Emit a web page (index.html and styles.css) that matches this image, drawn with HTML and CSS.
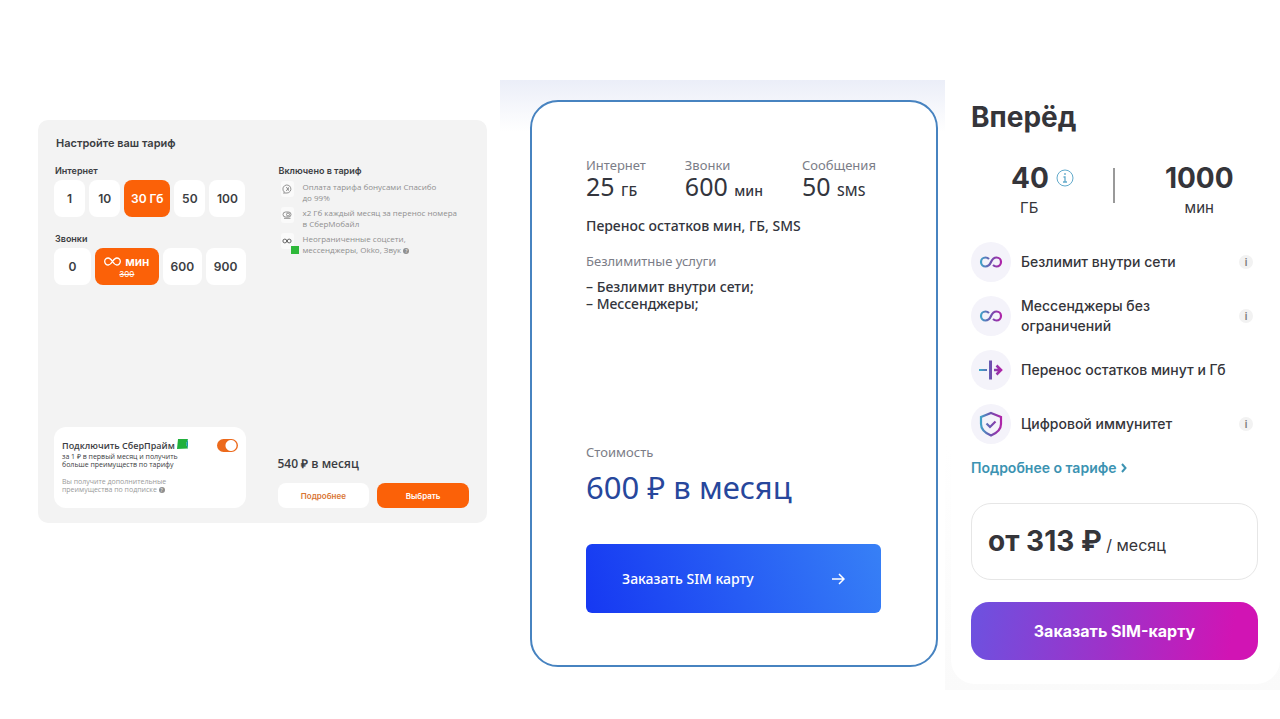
FILE: index.html
```html
<!DOCTYPE html>
<html lang="ru">
<head>
    <meta charset="UTF-8">
    <meta name="viewport" content="width=device-width, initial-scale=1.0">
    <title>Тарифы</title>
    <link rel="stylesheet" href="styles.css">
</head>
<body>
    <!-- shared gradient for the icons of the third card -->
    <svg class="defs" width="0" height="0" aria-hidden="true">
        <defs>
            <linearGradient id="grad" gradientUnits="userSpaceOnUse" x1="2" y1="0" x2="24" y2="0">
                <stop offset="0" stop-color="#3fa9c9"/>
                <stop offset="0.5" stop-color="#6f4fae"/>
                <stop offset="1" stop-color="#b321a8"/>
            </linearGradient>
        </defs>
    </svg>

    <main class="tariffs">
        <section class="setup">
            <h2 class="setup-title">Настройте ваш тариф</h2>
            <div class="setup-columns">
                <div class="setup-left">
                    <h3 class="setup-label">Интернет</h3>
                    <div class="options internet">
                        <button class="option">1</button>
                        <button class="option">10</button>
                        <button class="option active">30 Гб</button>
                        <button class="option">50</button>
                        <button class="option">100</button>
                    </div>
                    <h3 class="setup-label">Звонки</h3>
                    <div class="options calls">
                        <button class="option">0</button>
                        <button class="option active">
                            <span class="unlim">
                                <svg width="17" height="9" viewBox="0 0 17 9" fill="none" stroke="#fff" stroke-width="1.3"><path d="M8.5 4.5C6.900 2.200 5.800 1 4.200 1a3.500 3.500 0 0 0 0 7c1.600 0 2.700-1.200 4.300-3.500S11.200 1 12.800 1a3.500 3.500 0 0 1 0 7c-1.600 0-2.700-1.200-4.300-3.500z"/></svg>
                                мин
                            </span>
                            <s>300</s>
                        </button>
                        <button class="option">600</button>
                        <button class="option">900</button>
                    </div>
                    <div class="prime">
                        <div class="prime-head">
                            <label for="prime">Подключить СберПрайм</label>
                            <svg width="11" height="10" viewBox="0 0 11 10"><path d="M1 0h10L9 5l2 4.500L0 10z" fill="#21b03c"/><path d="M11 0L9 5l2 4.500z" fill="#1c9aa0"/></svg>
                            <input class="switch" type="checkbox" id="prime" checked>
                        </div>
                        <p class="prime-text">за 1 ₽ в первый месяц и получить<br>больше преимуществ по тарифу</p>
                        <p class="prime-note">Вы получите дополнительные<br>преимущества по подписке <span class="hint">?</span></p>
                    </div>
                </div>
                <div class="setup-right">
                    <h3 class="setup-label">Включено в тариф</h3>
                    <ul class="included">
                        <li>
                            <span class="included-icon">
                                <svg width="10" height="10" viewBox="0 0 10 10" fill="none" stroke="#777" stroke-width="0.8"><path d="M2.500 8.200A4 4 0 1 1 5 9H1.500z"/><path d="M4 3.200L6 5 4 6.800M6.300 3.200v3.600"/></svg>
                            </span>
                            <p>Оплата тарифа бонусами Спасибо<br>до 99%</p>
                        </li>
                        <li>
                            <span class="included-icon">
                                <svg width="10" height="10" viewBox="0 0 10 10" fill="none" stroke="#777" stroke-width="0.8"><rect x="1" y="2" width="8" height="5" rx="2.500"/><circle cx="6" cy="4.500" r="1.500"/><path d="M2 8.300h6.500"/></svg>
                            </span>
                            <p>x2 Гб каждый месяц за перенос номера<br>в СберМобайл</p>
                        </li>
                        <li>
                            <span class="included-icon">
                                <svg width="10" height="10" viewBox="0 0 10 10" fill="none" stroke="#666" stroke-width="1"><circle cx="2.800" cy="5" r="1.900"/><circle cx="7.200" cy="5" r="1.900"/></svg>
                                <span class="flag"></span>
                            </span>
                            <p>Неограниченные соцсети,<br>мессенджеры, Okko, Звук <span class="hint">?</span></p>
                        </li>
                    </ul>
                    <p class="setup-price">540 ₽ в месяц</p>
                    <div class="setup-buttons">
                        <button class="more">Подробнее</button>
                        <button class="choose">Выбрать</button>
                    </div>
                </div>
            </div>
        </section>

        <section class="plan">
            <div class="plan-card">
                <dl class="plan-stats">
                    <div>
                        <dt>Интернет</dt>
                        <dd>25 <small>ГБ</small></dd>
                    </div>
                    <div>
                        <dt>Звонки</dt>
                        <dd>600 <small>мин</small></dd>
                    </div>
                    <div>
                        <dt>Сообщения</dt>
                        <dd>50 <small>SMS</small></dd>
                    </div>
                </dl>
                <p class="plan-text">Перенос остатков мин, ГБ, SMS</p>
                <p class="plan-caption">Безлимитные услуги</p>
                <p class="plan-list">– Безлимит внутри сети;<br>– Мессенджеры;</p>
                <p class="plan-caption plan-cost">Стоимость</p>
                <p class="plan-price">600 ₽ в месяц</p>
                <button class="plan-order">
                    Заказать SIM карту
                    <svg width="14" height="12" viewBox="0 0 14 12" fill="none" stroke="#fff" stroke-width="1.500"><path d="M1 6h12M8 1l5 5-5 5"/></svg>
                </button>
            </div>
        </section>

        <section class="forward">
            <div class="forward-card">
                <h2 class="forward-title">Вперёд</h2>
                <div class="forward-stats">
                    <div class="forward-stat">
                        <div class="forward-value">
                            <b>40</b>
                            <svg width="18" height="18" viewBox="0 0 18 18" fill="none" stroke="#62aacb"><circle cx="9" cy="9" r="8"/><path d="M9 4v2M7.500 8H9v5M7 13h4" stroke-width="1.300"/></svg>
                        </div>
                        <span class="unit">ГБ</span>
                    </div>
                    <div class="forward-stat">
                        <div class="forward-value"><b>1000</b></div>
                        <span>мин</span>
                    </div>
                </div>
                <ul class="features">
                    <li>
                        <span class="feature-icon">
                            <svg width="26" height="26" viewBox="0 0 26 26" fill="none" stroke="url(#grad)" stroke-width="2.200"><path d="M11 10C10 9 9 8.500 7.500 8.500a4.500 4.500 0 0 0 0 9c3 0 4.500-2.200 5.500-4.500s2.500-4.500 5.500-4.500a4.500 4.500 0 0 1 0 9c-1.500 0-2.500-.5-3.500-1.500"/></svg>
                        </span>
                        <p>Безлимит внутри сети</p>
                        <button class="info">i</button>
                    </li>
                    <li>
                        <span class="feature-icon">
                            <svg width="26" height="26" viewBox="0 0 26 26" fill="none" stroke="url(#grad)" stroke-width="2.200"><path d="M11 10C10 9 9 8.500 7.500 8.500a4.500 4.500 0 0 0 0 9c3 0 4.500-2.200 5.500-4.500s2.500-4.500 5.500-4.500a4.500 4.500 0 0 1 0 9c-1.500 0-2.500-.5-3.500-1.500"/></svg>
                        </span>
                        <p>Мессенджеры без<br>ограничений</p>
                        <button class="info">i</button>
                    </li>
                    <li>
                        <span class="feature-icon">
                            <svg width="26" height="26" viewBox="0 0 26 26" fill="none" stroke="url(#grad)" stroke-width="2.200"><path d="M1 13h8" stroke-width="2"/><path d="M12.500 3.500L12.501 22.500" stroke-width="3"/><path d="M16 13h7M18.500 8.500L23 13l-4.500 4.500" stroke-width="2.600"/></svg>
                        </span>
                        <p>Перенос остатков минут и Гб</p>
                    </li>
                    <li>
                        <span class="feature-icon">
                            <svg width="26" height="26" viewBox="0 0 26 26" fill="none" stroke="url(#grad)" stroke-width="2.200"><path d="M13 2l10 4v7c0 5-4 9-10 11.500C7 22 3 18 3 13V6z"/><path d="M8.500 12.500l3.500 3.500 5.500-5.500"/></svg>
                        </span>
                        <p>Цифровой иммунитет</p>
                        <button class="info">i</button>
                    </li>
                </ul>
                <a class="forward-link" href="#">Подробнее о тарифе
                    <svg width="6" height="10" viewBox="0 0 6 10" fill="none" stroke="#3c93b2" stroke-width="2"><path d="M1 1l3.500 4L1 9"/></svg>
                </a>
                <div class="forward-price"><b>от 313 ₽</b> / месяц</div>
                <button class="forward-order">Заказать SIM-карту</button>
            </div>
        </section>
    </main>
</body>
</html>
```
FILE: styles.css
```css
* {
    box-sizing: border-box;
}
body {
    margin: 0;
    background: #fff;
    font-family: "Open Sans", "Noto Sans", sans-serif;
}
h2, h3, p, ul, dl, dd {
    margin: 0;
    padding: 0;
}
ul {
    list-style: none;
}
button {
    border: none;
    font-family: inherit;
    cursor: pointer;
}
svg {
    flex: none;
}
.defs {
    position: absolute;
}
.tariffs {
    display: grid;
    grid-template-columns: 449fr 458fr 335fr;
    align-items: start;
    padding: 80px 0 28px 38px;
}

/* tariff constructor */
.setup {
    margin-top: 40px;
    padding: 14px 18px 15px 16px;
    border-radius: 10px;
    background: #f3f3f3;
    color: #3b3d42;
    font-family: Inter, "Open Sans", sans-serif;
}
.setup-title {
    font-size: 11px;
    line-height: 18px;
    font-weight: 600;
    padding-left: 2px;
}
.setup-columns {
    display: grid;
    grid-template-columns: 1fr 1fr;
    gap: 32px;
    margin-top: 12px;
}
.setup-left, .setup-right {
    display: flex;
    flex-direction: column;
}
.setup-label {
    font-size: 9px;
    line-height: 14px;
    font-weight: 600;
    padding-left: 1px;
}
.options {
    display: grid;
    gap: 4px;
    margin: 2px 0 15px;
}
.internet {
    grid-template-columns: 31fr 31fr 46fr 31fr 36fr;
}
.calls {
    grid-template-columns: 36fr 63fr 38fr 39fr;
}
.option {
    height: 37px;
    padding: 0;
    border-radius: 8px;
    background: #fff;
    color: #3b3d42;
    font-size: 12px;
    font-weight: 600;
}
.option.active {
    background: #fb6108;
    color: #fff;
}
.option s {
    display: block;
    font-size: 8px;
    line-height: 10px;
    font-weight: 400;
}
.unlim {
    display: flex;
    align-items: center;
    justify-content: center;
    gap: 4px;
    line-height: 14px;
}
.prime {
    margin-top: 127px;
    padding: 11px 8px 14px;
    border-radius: 12px;
    background: #fff;
    font-family: "Open Sans", sans-serif;
}
.prime-head {
    display: flex;
    align-items: center;
    gap: 2px;
    height: 15px;
    font-size: 9px;
    font-weight: 600;
    white-space: nowrap;
}
.prime-head svg {
    margin-bottom: 3px;
}
.switch {
    appearance: none;
    width: 21px;
    height: 13px;
    margin: 0 0 0 auto;
    border-radius: 7px;
    background: radial-gradient(circle at 14px 50%, #fff 5px, #ec6a1c 6px);
}
.prime-text {
    font-size: 7px;
    line-height: 8px;
    white-space: nowrap;
}
.prime-note {
    margin-top: 9px;
    color: #9a9a9a;
    font-size: 7px;
    line-height: 8px;
    white-space: nowrap;
}
.hint {
    display: inline-block;
    width: 6px;
    height: 6px;
    border-radius: 50%;
    background: #8f8f8f;
    color: #fff;
    font-size: 5px;
    line-height: 6px;
    text-align: center;
    vertical-align: middle;
}
.included {
    display: flex;
    flex-direction: column;
    gap: 4px;
    margin-top: 3px;
}
.included li {
    display: flex;
    gap: 9px;
    padding-left: 3px;
    color: #8f8f8f;
    font-family: "Open Sans", sans-serif;
    font-size: 8px;
    line-height: 11px;
    white-space: nowrap;
}
.included-icon {
    position: relative;
    display: flex;
    align-items: center;
    justify-content: center;
    flex: none;
    width: 13px;
    height: 16px;
    border-radius: 3px;
    background: #fafafa;
}
.flag {
    position: absolute;
    right: -5px;
    bottom: -5px;
    width: 8px;
    height: 8px;
    background: #2eb83a;
}
.setup-price {
    margin-top: auto;
    font-family: "Open Sans", sans-serif;
    font-size: 12px;
    line-height: 18px;
    font-weight: 600;
}
.setup-buttons {
    display: grid;
    grid-template-columns: 1fr 1fr;
    gap: 8px;
    margin-top: 10px;
}
.setup-buttons button {
    height: 25px;
    padding: 0;
    border-radius: 8px;
    font-size: 8px;
    font-weight: 600;
}
.setup-buttons .more {
    background: #fff;
    color: #d97532;
}
.setup-buttons .choose {
    background: #fb6108;
    color: #fff;
}

/* tariff with a blue frame */
.plan {
    margin-left: 13px;
    padding: 20px 7px 0 30px;
    background: linear-gradient(#ebeef8, #fff 52px);
}
.plan-card {
    padding: 55px 55px 52px 54px;
    border: 2px solid #4783c0;
    border-radius: 28px;
    background: #fff;
    color: #33353d;
    font-family: "Noto Sans", sans-serif;
}
.plan-stats {
    display: flex;
    gap: 39px;
    white-space: nowrap;
}
.plan-stats dt {
    color: #7b7d87;
    font-size: 13px;
    line-height: 16px;
}
.plan-stats dd {
    font-size: 25px;
    line-height: 27px;
}
.plan-stats small {
    font-size: 14px;
    font-weight: 500;
}
.plan-text {
    margin-top: 12px;
    font-size: 14px;
    line-height: 20px;
    font-weight: 500;
}
.plan-caption {
    margin-top: 16px;
    color: #7b7d87;
    font-size: 13px;
    line-height: 18px;
}
.plan-list {
    margin-top: 8px;
    font-size: 14px;
    line-height: 17px;
    font-weight: 500;
}
.plan-cost {
    margin-top: 131px;
}
.plan-price {
    margin-top: 6px;
    color: #27479c;
    font-size: 31px;
    line-height: 40px;
}
.plan-order {
    display: flex;
    align-items: center;
    justify-content: space-between;
    width: 100%;
    height: 69px;
    margin-top: 37px;
    padding: 0 36px;
    border-radius: 6px;
    background: linear-gradient(70deg, #1638f2, #3780f6);
    color: #fff;
    font-size: 14px;
    font-weight: 500;
}

/* tariff "Вперёд" */
.forward {
    padding-left: 6px;
    padding-bottom: 6px;
    background: linear-gradient(#fff 60%, #fafafa);
}
.forward-card {
    padding: 19px 22px 24px 20px;
    border-radius: 0 0 24px 24px;
    background: #fff;
    color: #35353a;
    font-family: Inter, sans-serif;
}
.forward-title {
    font-size: 28px;
    line-height: 36px;
    font-weight: 700;
}
.forward-stats {
    display: grid;
    grid-template-columns: 1fr 1fr;
    margin-top: 24px;
}
.forward-stat {
    display: flex;
    flex-direction: column;
    align-items: center;
    padding-left: 26px;
    font-size: 15px;
    line-height: 22px;
}
.forward-stat:first-child {
    align-items: flex-start;
    padding-left: 40px;
    background: linear-gradient(#999, #999) right 9px / 2px 35px no-repeat;
}
.forward-stat:first-child .unit {
    padding-left: 9px;
}
.forward-value {
    display: flex;
    align-items: center;
    gap: 7px;
    height: 38px;
    font-size: 28px;
}
.features {
    display: flex;
    flex-direction: column;
    gap: 14px;
    margin-top: 23px;
}
.features li {
    display: flex;
    align-items: center;
    height: 40px;
    font-size: 14px;
    line-height: 20px;
    font-weight: 500;
}
.features p {
    white-space: nowrap;
}
.feature-icon {
    display: flex;
    align-items: center;
    justify-content: center;
    width: 40px;
    height: 40px;
    margin-right: 10px;
    border-radius: 50%;
    background: #f4f3fa;
}
.info {
    width: 14px;
    height: 14px;
    margin: 0 5px 0 auto;
    padding: 0;
    border-radius: 50%;
    background: #f2f2f2;
    color: #777;
    font-size: 10px;
    line-height: 14px;
    font-weight: 600;
}
.forward-link {
    display: flex;
    align-items: center;
    gap: 4px;
    margin-top: 14px;
    color: #3c93b2;
    font-size: 14px;
    line-height: 20px;
    font-weight: 600;
    text-decoration: none;
}
.forward-price {
    height: 77px;
    margin-top: 25px;
    padding-left: 16px;
    border: 1px solid #e6e6e6;
    border-radius: 20px;
    font-size: 16px;
    line-height: 75px;
    white-space: nowrap;
}
.forward-price b {
    font-size: 28px;
}
.forward-order {
    width: 100%;
    height: 58px;
    margin-top: 22px;
    border-radius: 18px;
    background: linear-gradient(100deg, #6c52e0, #a030c8 50%, #d114b4 90%);
    color: #fff;
    font-size: 16px;
    font-weight: 700;
}
```
